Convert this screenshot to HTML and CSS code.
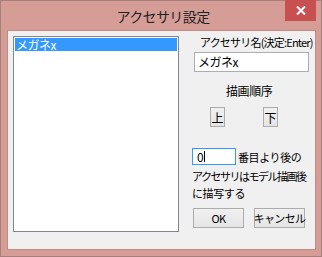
FILE: index.html
```html
<!DOCTYPE html>
<html>
<head>
<meta charset="utf-8">
<link rel="stylesheet" href="styles.css">
</head>
<body>
<div class="window">
  <div class="titlebar">
    <div class="title">アクセサリ設定</div>
    <div class="close">
      <svg width="10" height="9" viewBox="0 0 10 9"><path d="M1 0.5 L9 8.5 M9 0.5 L1 8.5" stroke="#fff" stroke-width="2"/></svg>
    </div>
  </div>
  <div class="client">
    <div class="listbox">
      <div class="item selected">メガネx</div>
    </div>
    <div class="panel">
      <div class="label name-label">アクセサリ名(決定:Enter)</div>
      <div class="textbox name-box">メガネx</div>
      <div class="label order-label">描画順序</div>
      <div class="updown">
        <div class="btn small">上</div>
        <div class="btn small">下</div>
      </div>
      <div class="numrow">
        <div class="textbox num-box">0<span class="caret"></span></div>
        <span class="label">番目より後の</span>
      </div>
      <div class="label line2">アクセサリはモデル描画後</div>
      <div class="label line3">に描写する</div>
      <div class="actions">
        <div class="btn wide">OK</div>
        <div class="btn wide">キャンセル</div>
      </div>
    </div>
  </div>
</div>
</body>
</html>
```
FILE: styles.css
```css
html, body {
  margin: 0;
  padding: 0;
  width: 322px;
  height: 257px;
  overflow: hidden;
}
body {
  font-family: "Noto Sans CJK JP", "Noto Sans", sans-serif;
  font-size: 12px;
  color: #000;
}
.window {
  box-sizing: border-box;
  width: 322px;
  height: 257px;
  border: 1px solid #a67f7a;
  background: #d69d97;
  display: flex;
  flex-direction: column;
}
.titlebar {
  height: 29px;
  display: flex;
  align-items: flex-start;
  position: relative;
}
.title {
  flex: 1;
  text-align: center;
  font-size: 14px;
  letter-spacing: -0.6px;
  line-height: 20px;
  padding-top: 5px;
  color: #222;
  padding-left: 4px;
}
.close {
  position: absolute;
  right: 5px;
  top: -1px;
  width: 31px;
  height: 21px;
  background: #c75050;
  display: flex;
  align-items: center;
  justify-content: center;
}
.client {
  box-sizing: border-box;
  margin: 0 5px 0 6px;
  height: 220px;
  border: 1px solid #c08b85;
  background: #f0f0f0;
  padding: 5px;
  display: flex;
  gap: 11px;
}
.listbox {
  box-sizing: border-box;
  flex: 0 0 166px;
  width: 166px;
  height: 196px;
  border: 1px solid #828790;
  background: #fff;
  padding: 1px;
}
.item {
  height: 13px;
  line-height: 13px;
  font-size: 12px;
  padding-left: 1px;
  letter-spacing: -0.5px;
}
.item.selected {
  background: #3399ff;
  color: #fff;
}
.panel {
  display: flex;
  flex-direction: column;
  align-items: flex-start;
  flex: 1;
  min-width: 0;
}
.label {
  font-size: 11px;
  line-height: 14px;
  letter-spacing: -0.4px;
  white-space: nowrap;
}
.name-label {
  margin-left: 10px;
  margin-top: -1px;
  letter-spacing: -0.8px;
}
.textbox {
  box-sizing: border-box;
  background: #fff;
  border: 1px solid #abadb3;
  font-size: 12px;
  line-height: 16px;
  padding-left: 3px;
  letter-spacing: -0.5px;
}
.name-box {
  margin-left: 4px;
  margin-top: 3px;
  width: 115px;
  height: 20px;
  line-height: 18px;
  flex-shrink: 0;
}
.order-label {
  margin-left: 36px;
  margin-top: 12px;
  font-size: 12px;
}
.updown {
  display: flex;
  gap: 38px;
  margin-left: 20px;
  margin-top: 9px;
}
.btn {
  box-sizing: border-box;
  border: 1px solid #acacac;
  background: linear-gradient(#f0f0f0, #e5e5e5);
  display: flex;
  align-items: center;
  justify-content: center;
  font-size: 12px;
  white-space: nowrap;
  flex-shrink: 0;
}
.small {
  width: 15px;
  height: 20px;
}
.numrow {
  display: flex;
  align-items: center;
  margin-left: 2px;
  margin-top: 21px;
  gap: 2px;
}
.num-box {
  width: 44px;
  height: 17px;
  line-height: 15px;
  border-color: #3399ff;
  padding-left: 4px;
  display: flex;
  align-items: center;
  flex-shrink: 0;
}
.caret {
  display: inline-block;
  width: 1px;
  height: 11px;
  background: #000;
  margin-left: 1px;
}
.line2 {
  margin-left: 2px;
  margin-top: 4px;
  letter-spacing: -1.5px;
}
.line3 {
  margin-left: 2px;
  margin-top: 3px;
}
.actions {
  display: flex;
  gap: 10px;
  margin-left: 3px;
  margin-top: 8px;
}
.wide {
  width: 51px;
  height: 20px;
  font-size: 11px;
  letter-spacing: -0.6px;
}
```
